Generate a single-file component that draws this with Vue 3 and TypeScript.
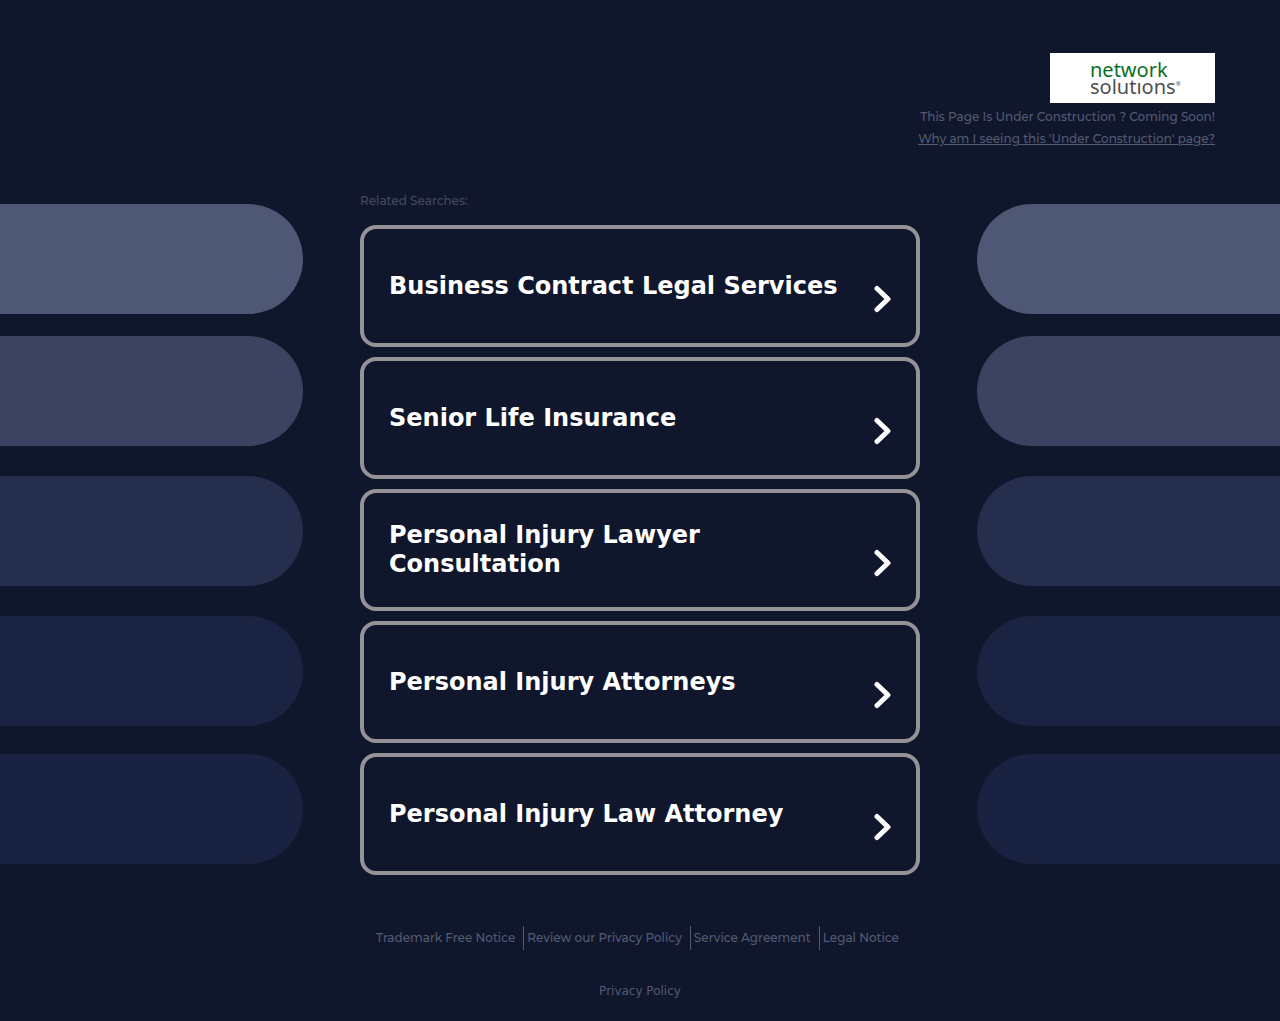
<script setup lang="ts">
const searches: string[] = [
  'Business Contract Legal Services',
  'Senior Life Insurance',
  'Personal Injury Lawyer Consultation',
  'Personal Injury Attorneys',
  'Personal Injury Law Attorney',
]

const legalLinks: string[] = [
  'Trademark Free Notice',
  'Review our Privacy Policy',
  'Service Agreement',
  'Legal Notice',
]

const sides = ['left', 'right'] as const
</script>

<template>
  <div class="page">
    <header class="top">
      <a href="#" class="logo" aria-label="Network Solutions">
        <span class="logo-text">
          <span class="logo-network">network</span>
          <span class="logo-solutions">solutıons<sup>®</sup></span>
        </span>
      </a>
      <p class="notice">This Page Is Under Construction ? Coming Soon!</p>
      <a href="#" class="notice why">Why am I seeing this 'Under Construction' page?</a>
    </header>

    <div class="middle">
      <div v-for="side in sides" :key="side" class="pills" :class="side" aria-hidden="true">
        <span class="pill tone-1"></span>
        <span class="pill tone-2"></span>
        <span class="pill tone-3"></span>
        <span class="pill tone-4"></span>
        <span class="pill tone-5"></span>
      </div>

      <main class="searches">
        <h1 class="label">Related Searches:</h1>
        <ul class="cards">
          <li v-for="item in searches" :key="item">
            <a href="#" class="card">
              <span class="card-title">{{ item }}</span>
              <svg class="chevron" width="17" height="28" viewBox="0 0 17 28" aria-hidden="true">
                <path d="M3 3.5 L14 14 L3 24.5" />
              </svg>
            </a>
          </li>
        </ul>
      </main>
    </div>

    <footer class="footer">
      <nav class="legal">
        <a v-for="link in legalLinks" :key="link" href="#">{{ link }}</a>
      </nav>
      <a href="#" class="privacy">Privacy Policy</a>
    </footer>
  </div>
</template>

<style>
body {
  margin: 0;
  background: #10162b;
}
</style>

<style scoped>
.page {
  min-height: 100vh;
  box-sizing: border-box;
  background: #10162b;
  color: #535b74;
  font-family: Montserrat, Inter, "Open Sans", sans-serif;
  font-size: 12px;
  font-weight: 500;
  overflow: hidden;
}

a {
  color: inherit;
  text-decoration: none;
}

.top {
  display: flex;
  flex-direction: column;
  align-items: flex-end;
  padding: 53px 65px 0;
}

.logo {
  display: flex;
  justify-content: center;
  width: 165px;
  height: 50px;
  background: #fff;
}

.logo-text {
  display: flex;
  flex-direction: column;
  width: 85px;
  padding-top: 8px;
  font-family: "Noto Sans", "Open Sans", sans-serif;
  font-size: 20px;
  font-weight: 400;
  line-height: 17px;
  white-space: nowrap;
}

.logo-network {
  color: #0b6e27;
}

.logo-solutions {
  color: #4f4f51;
}

.logo-solutions sup {
  font-size: 6px;
  line-height: 1px;
}

.notice {
  margin: 3px 0 0;
  font-size: 12px;
  line-height: 22px;
}

.why {
  margin: 0;
  text-decoration: underline;
}

.middle {
  display: grid;
  grid-template-columns: 1fr 560px 1fr;
  column-gap: 57px;
  margin-top: 43px;
}

.pills {
  display: flex;
  flex-direction: column;
  padding-top: 11px;
}

.left {
  grid-area: 1 / 1;
}

.right {
  grid-area: 1 / 3;
}

.pill {
  height: 110px;
}

.left .pill {
  border-radius: 0 55px 55px 0;
}

.right .pill {
  border-radius: 55px 0 0 55px;
}

.tone-1 {
  background: #4e5773;
}

.tone-2 {
  margin-top: 22px;
  background: #3b4361;
}

.tone-3 {
  margin-top: 30px;
  background: #262e4d;
}

.tone-4 {
  margin-top: 30px;
  background: #1b2342;
}

.tone-5 {
  margin-top: 28px;
  background: #192240;
}

.searches {
  grid-area: 1 / 2;
}

.label {
  margin: 0 0 16px;
  color: #424a62;
  font-size: 12px;
  font-weight: 500;
  line-height: 16px;
}

.cards {
  display: flex;
  flex-direction: column;
  gap: 10px;
  margin: 0;
  padding: 0;
  list-style: none;
}

.card {
  display: flex;
  align-items: center;
  justify-content: space-between;
  box-sizing: border-box;
  min-height: 122px;
  padding: 0 25px;
  border: 4px solid #949498;
  border-radius: 16px;
  color: #fff;
  font-family: "DejaVu Sans", sans-serif;
  font-size: 24px;
  font-weight: 700;
  line-height: 29px;
}

.chevron {
  flex: none;
  margin-top: 26px;
  fill: none;
  stroke: #fff;
  stroke-width: 5;
  stroke-linecap: round;
  stroke-linejoin: round;
}

.footer {
  display: flex;
  flex-direction: column;
  align-items: center;
  padding: 51px 0 20px;
}

.legal {
  display: flex;
}

.legal a {
  padding: 0 8px 0 3px;
  line-height: 24px;
}

.legal a + a {
  border-left: 1px solid #535b74;
}

.privacy {
  margin-top: 33px;
  font-family: "DejaVu Sans", sans-serif;
  font-weight: 400;
  line-height: 16px;
}
</style>
